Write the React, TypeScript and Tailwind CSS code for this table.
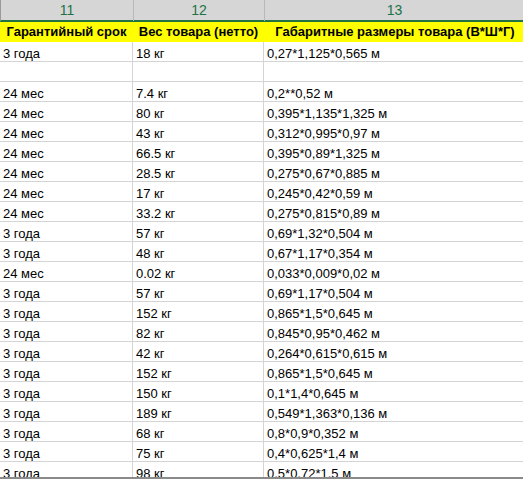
import React from "react";

const rows: [string, string, string][] = [
  ["3 года", "18 кг", "0,27*1,125*0,565 м"],
  ["", "", ""],
  ["24 мес", "7.4 кг", "0,2**0,52 м"],
  ["24 мес", "80 кг", "0,395*1,135*1,325 м"],
  ["24 мес", "43 кг", "0,312*0,995*0,97 м"],
  ["24 мес", "66.5 кг", "0,395*0,89*1,325 м"],
  ["24 мес", "28.5 кг", "0,275*0,67*0,885 м"],
  ["24 мес", "17 кг", "0,245*0,42*0,59 м"],
  ["24 мес", "33.2 кг", "0,275*0,815*0,89 м"],
  ["3 года", "57 кг", "0,69*1,32*0,504 м"],
  ["3 года", "48 кг", "0,67*1,17*0,354 м"],
  ["24 мес", "0.02 кг", "0,033*0,009*0,02 м"],
  ["3 года", "57 кг", "0,69*1,17*0,504 м"],
  ["3 года", "152 кг", "0,865*1,5*0,645 м"],
  ["3 года", "82 кг", "0,845*0,95*0,462 м"],
  ["3 года", "42 кг", "0,264*0,615*0,615 м"],
  ["3 года", "152 кг", "0,865*1,5*0,645 м"],
  ["3 года", "150 кг", "0,1*1,4*0,645 м"],
  ["3 года", "189 кг", "0,549*1,363*0,136 м"],
  ["3 года", "68 кг", "0,8*0,9*0,352 м"],
  ["3 года", "75 кг", "0,4*0,625*1,4 м"],
  ["3 года", "98 кг", "0,5*0,72*1,5 м"],
];

export default function App() {
  return (
    <div
      className="w-[523px] h-[479px] overflow-hidden bg-white flex flex-col text-black"
      style={{ fontFamily: '"Liberation Sans", Arial, sans-serif' }}
    >
      <div className="flex-1 overflow-hidden">
        <div className="grid grid-cols-[133px_131px_259px] h-[22px] bg-[#d6d6d6] border-b-2 border-[#217346] text-[#217346] text-[14px] border-l border-l-[#9a9a9a]">
          <div className="flex items-center justify-center border-r border-[#b8b8b8]">11</div>
          <div className="flex items-center justify-center border-r border-[#b8b8b8]">12</div>
          <div className="flex items-center justify-center">13</div>
        </div>
        <div className="grid grid-cols-[133px_131px_259px] h-[20px] bg-[#ffff00] font-bold text-[13px] whitespace-nowrap">
          <div className="flex items-center justify-center">Гарантийный срок</div>
          <div className="flex items-center justify-center">Вес товара (нетто)</div>
          <div className="flex items-center justify-center pl-[3px]">Габаритные размеры товара (В*Ш*Г)</div>
        </div>
        {rows.map((r, i) => (
          <div
            key={i}
            className="grid grid-cols-[133px_131px_259px] h-[20px] border-b border-[#d4d4d4] text-[13px] whitespace-nowrap"
          >
            <div className="flex items-center pt-[2px] pl-[3px] border-r border-[#d4d4d4]">{r[0]}</div>
            <div className="flex items-center pt-[2px] pl-[3px] border-r border-[#d4d4d4]">{r[1]}</div>
            <div className="flex items-center pt-[2px] pl-[3px]">{r[2]}</div>
          </div>
        ))}
      </div>
      <div className="h-[2px] bg-[#8a8a8a] shrink-0" />
    </div>
  );
}
